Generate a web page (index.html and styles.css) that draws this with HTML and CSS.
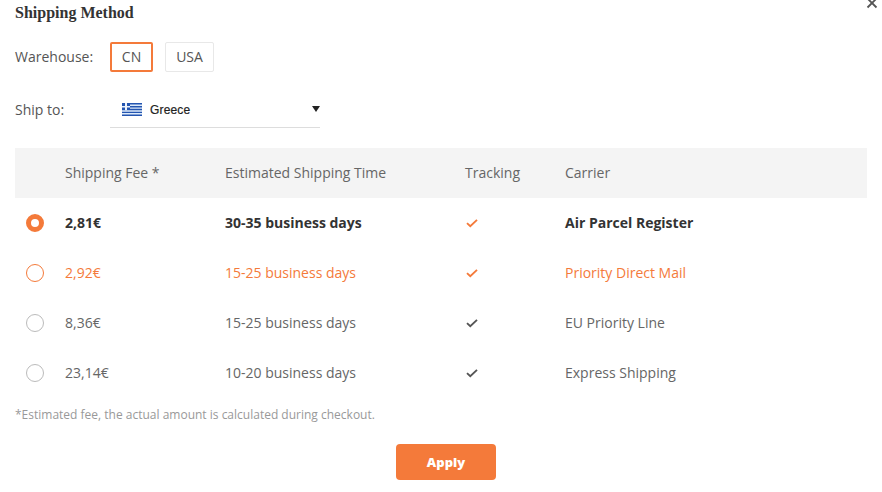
FILE: index.html
```html
<!DOCTYPE html>
<html lang="en">
<head>
<meta charset="utf-8">
<title>Shipping Method</title>
<link rel="stylesheet" href="styles.css">
</head>
<body>
<main class="dialog">
  <svg class="close" viewBox="0 0 12 12"><path d="M1.5 1.5l9 9M10.5 1.5l-9 9"/></svg>
  <h1 class="title">Shipping Method</h1>
  <div class="field warehouse">
    <span class="label">Warehouse:</span>
    <span class="option selected">CN</span>
    <span class="option">USA</span>
  </div>
  <div class="field ship">
    <span class="label">Ship to:</span>
    <div class="select">
      <svg class="flag" viewBox="0 0 20 13">
        <rect width="20" height="13" fill="#dceafa"/>
        <path fill="#2455b0" d="M0 0h20v1.5H0zM0 3h20v1.4H0zM0 5.8h20v1.4H0zM0 8.7h20v1.4H0zM0 11.5h20V13H0zM0 0h8v7.2H0z"/>
        <path fill="#eef4fc" d="M3 0h2v7.2H3zM0 3h8v1.4H0z"/>
      </svg>
      <span class="country">Greece</span>
      <svg class="caret" viewBox="0 0 8 6"><path d="M0 0h8L4 6z"/></svg>
    </div>
  </div>
  <div class="table">
    <div class="row head"><span></span><span>Shipping Fee *</span><span>Estimated Shipping Time</span><span>Tracking</span><span>Carrier</span></div>
    <div class="row current"><i class="radio"></i><span>2,81€</span><span>30-35 business days</span><svg class="check" viewBox="0 0 12 9"><path d="M1 4.1l3.3 3L11 0.9"/></svg><span>Air Parcel Register</span></div>
    <div class="row hover"><i class="radio"></i><span>2,92€</span><span>15-25 business days</span><svg class="check" viewBox="0 0 12 9"><path d="M1 4.1l3.3 3L11 0.9"/></svg><span>Priority Direct Mail</span></div>
    <div class="row"><i class="radio"></i><span>8,36€</span><span>15-25 business days</span><svg class="check" viewBox="0 0 12 9"><path d="M1 4.1l3.3 3L11 0.9"/></svg><span>EU Priority Line</span></div>
    <div class="row"><i class="radio"></i><span>23,14€</span><span>10-20 business days</span><svg class="check" viewBox="0 0 12 9"><path d="M1 4.1l3.3 3L11 0.9"/></svg><span>Express Shipping</span></div>
  </div>
  <p class="note">*Estimated fee, the actual amount is calculated during checkout.</p>
  <button class="apply">Apply</button>
</main>
</body>
</html>
```
FILE: styles.css
```css
* { box-sizing: border-box; }
body { margin: 0; background: #fff; font-family: "Open Sans", sans-serif; font-size: 14px; color: #666; }
.dialog { position: relative; height: 492px; padding: 3px 15px 0; overflow: hidden; }
.close { position: absolute; left: 866px; top: -3px; width: 12px; height: 12px; fill: none; stroke: #555; stroke-width: 1.8; }
.title { margin: 0; font: bold 16px/20px "Liberation Serif", serif; color: #333; }
.field { display: flex; align-items: center; }
.label { width: 95px; padding-bottom: 2px; color: #555; }
.warehouse { height: 30px; margin-top: 19px; }
.option { height: 30px; width: 49px; text-align: center; border: 1px solid #e8e8e8; border-radius: 2px; line-height: 28px; color: #555; }
.option.selected { width: 43px; margin-right: 12px; border: 2px solid #f47a3a; line-height: 26px; }
.ship { height: 36px; margin-top: 20px; }
.select { display: flex; align-items: center; width: 210px; height: 36px; padding: 0 0 0 12px; border-bottom: 1px solid #ddd; }
.flag { width: 20px; height: 13px; }
.country { margin-left: 8px; font: 12px "Liberation Sans", sans-serif; letter-spacing: 0.15px; color: #222; -webkit-text-stroke: 0.2px #222; }
.caret { width: 8px; height: 6px; margin: 0 0 2px auto; fill: #222; }
.table { width: 852px; margin-top: 20px; }
.row { display: grid; grid-template-columns: 50px 160px 240px 100px 1fr; align-items: center; height: 50px; }
.row span { padding-bottom: 2px; }
.head { background: #f4f4f4; }
.current { color: #333; font-weight: 700; }
.hover { color: #f47a3a; }
.radio { width: 18px; height: 18px; margin-left: 11px; border: 1px solid #bbb; border-radius: 50%; }
.hover .radio { border-color: #f47a3a; }
.current .radio { border: 5px solid #f47a3a; }
.check { width: 12px; height: 9px; margin-left: 1px; fill: none; stroke: #555; stroke-width: 1.9; }
.current .check, .hover .check { stroke: #f47a3a; }
.note { margin: 7px 0 0; font-size: 12px; line-height: 20px; color: #999; }
.apply { display: block; width: 100px; height: 36px; margin: 19px 0 0 381px; padding: 0; border: 0; border-radius: 4px; background: #f47a3a; color: #fff; font: 800 13px "Open Sans", sans-serif; }
```
